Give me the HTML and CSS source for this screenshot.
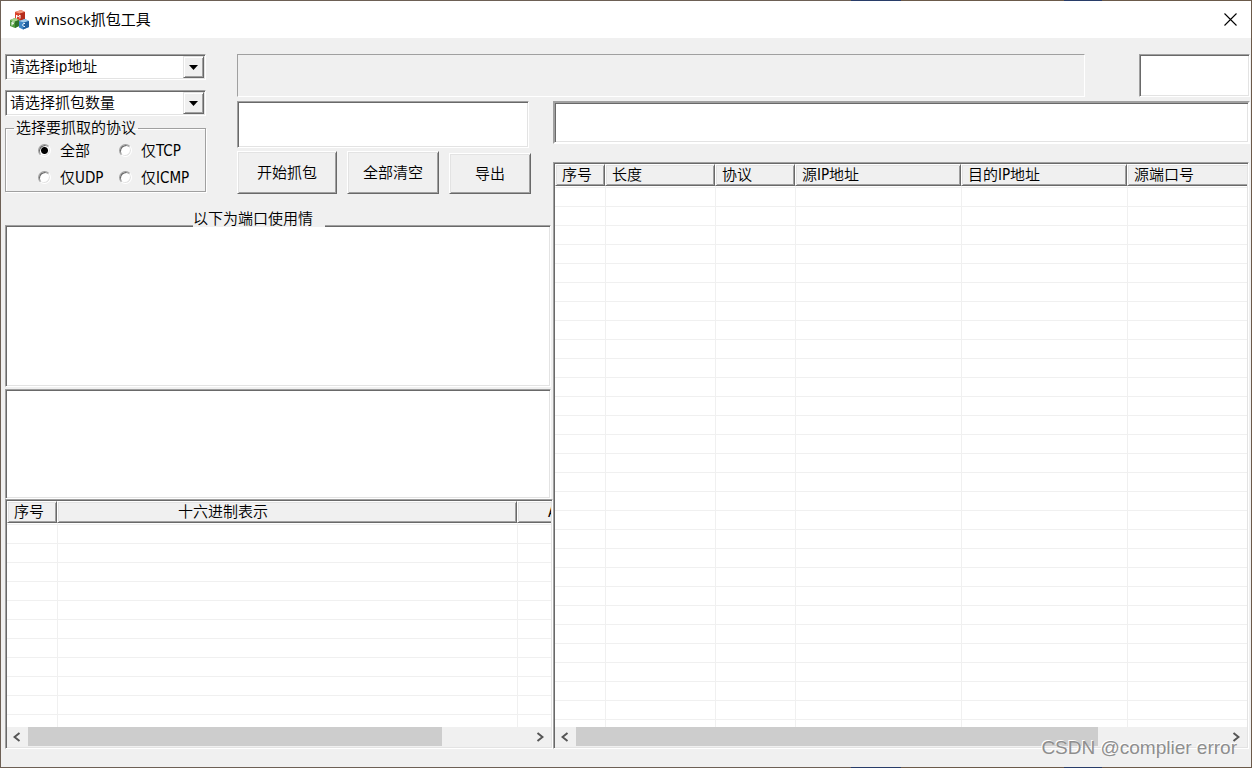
FILE: index.html
```html
<!DOCTYPE html>
<html lang="zh-CN">
<head>
<meta charset="utf-8">
<title>winsock抓包工具</title>
<link rel="stylesheet" href="styles.css">
</head>
<body>
<div class="window">
  <header class="titlebar">
    <svg class="app-icon" width="20" height="20" viewBox="0 0 20 20" aria-hidden="true">
      <path d="M5 2l6-2 4 2v7l-5 2-5-2z" fill="#d8432c"/>
      <path d="M5 2l6-2 4 2-5 1.500z" fill="#f29a80"/>
      <path d="M10 3.500l5-1.500v7l-5 2z" fill="#b52c1b"/>
      <path d="M0 10l5-2 4 2v6l-4 2-5-2z" fill="#4f9a3a"/>
      <path d="M0 10l5-2 4 2-4 1.500z" fill="#a5d38a"/>
      <path d="M5 11.500l4-1.500v6l-4 2z" fill="#2f7428"/>
      <path d="M9 11l6-2 4 2v6l-6 2.500-4-2z" fill="#3d86c6"/>
      <path d="M9 11l6-2 4 2-5 1.500z" fill="#a0cbea"/>
      <path d="M14 12.500l5-1.500v6l-6 2.500z" fill="#1f5f9f"/>
      <path d="M6.500 8.500V5l1.700 2L10 5v3.500M2 15.500v-3.500h2.500M2 13.700h2M15 13.500c-2.500-1-3.500 3.500 0 3" fill="none" stroke="#fff" stroke-width="1"/>
    </svg>
    <h1 class="title">winsock抓包工具</h1>
    <button class="close" type="button" aria-label="关闭">
      <svg width="13" height="13" viewBox="0 0 13 13"><path d="M.5.5l12 12M12.500.5l-12 12" stroke="#000" stroke-width="1.100" fill="none"/></svg>
    </button>
  </header>

  <main class="client">
    <section class="options">
      <div class="combo">
        <select aria-label="ip地址"><option>请选择ip地址</option></select>
        <span class="drop"><svg width="9" height="5" viewBox="0 0 9 5"><path d="M0 0h9L4.500 5z"/></svg></span>
      </div>
      <div class="combo">
        <select aria-label="抓包数量"><option>请选择抓包数量</option></select>
        <span class="drop"><svg width="9" height="5" viewBox="0 0 9 5"><path d="M0 0h9L4.500 5z"/></svg></span>
      </div>
      <fieldset class="protocols">
        <legend>选择要抓取的协议</legend>
        <div class="radios">
          <label><input type="radio" name="proto" checked>全部</label>
          <label><input type="radio" name="proto">仅TCP</label>
          <label><input type="radio" name="proto">仅UDP</label>
          <label><input type="radio" name="proto">仅ICMP</label>
        </div>
      </fieldset>
    </section>

    <section class="status">
      <div class="panel"></div>
      <input class="sunken counter" type="text" aria-label="计数">
    </section>

    <section class="actions">
      <input class="sunken message" type="text" aria-label="状态">
      <div class="buttons">
        <button class="push start" type="button">开始抓包</button>
        <button class="push clear" type="button">全部清空</button>
        <button class="push export" type="button">导出</button>
      </div>
    </section>

    <section class="packets">
      <div class="filter-frame"><input class="filter" type="text" aria-label="过滤"></div>
      <div class="sunken list">
        <div class="view">
          <table data-rows="30">
            <colgroup><col class="w50"><col class="w110"><col class="w80"><col class="w166"><col class="w166"><col class="w166"></colgroup>
            <thead><tr><th>序号</th><th>长度</th><th>协议</th><th>源IP地址</th><th>目的IP地址</th><th>源端口号</th></tr></thead>
            <tbody></tbody>
          </table>
        </div>
        <div class="scrollbar">
          <button type="button" aria-label="向左"><svg width="8" height="10" viewBox="0 0 8 10"><path d="M6.500 1l-5 4 5 4"/></svg></button>
          <div class="track"><div class="thumb" style="width:80.3%"></div></div>
          <button type="button" aria-label="向右"><svg width="8" height="10" viewBox="0 0 8 10"><path d="M1.500 1l5 4-5 4"/></svg></button>
        </div>
      </div>
    </section>

    <section class="details">
      <label class="ports-label" for="ports">以下为端口使用情</label>
      <textarea class="sunken ports" id="ports"></textarea>
      <textarea class="sunken info" aria-label="详细信息"></textarea>
      <div class="sunken list">
        <div class="view">
          <table data-rows="12">
            <colgroup><col class="w50"><col class="w460"><col class="w166"></colgroup>
            <thead><tr><th>序号</th><th class="hex">十六进制表示</th><th class="ascii">A</th></tr></thead>
            <tbody></tbody>
          </table>
        </div>
        <div class="scrollbar">
          <button type="button" aria-label="向左"><svg width="8" height="10" viewBox="0 0 8 10"><path d="M6.500 1l-5 4 5 4"/></svg></button>
          <div class="track"><div class="thumb" style="width:82.5%"></div></div>
          <button type="button" aria-label="向右"><svg width="8" height="10" viewBox="0 0 8 10"><path d="M1.500 1l5 4-5 4"/></svg></button>
        </div>
      </div>
    </section>
  </main>
  <div class="watermark">CSDN @complier error</div>
</div>
<script src="rows.js"></script>
</body>
</html>
```

FILE: rows.js
```js
// Fills each list with its empty grid rows.
document.querySelectorAll('table[data-rows]').forEach(function (table) {
  var columns = table.querySelectorAll('th').length;
  var body = table.tBodies[0];
  for (var i = 0; i < Number(table.dataset.rows); i++) {
    var row = body.insertRow();
    for (var c = 0; c < columns; c++) row.insertCell();
  }
});
```

FILE: styles.css
```css
* { box-sizing: border-box; }

body {
  margin: 0;
  font: 350 15px/20px "DejaVu Sans Condensed", "Noto Sans CJK SC", sans-serif;
  color: #000;
  background: #6b5a4a;
}

button, input, select, textarea { font: inherit; color: inherit; margin: 0; }

.window {
  position: relative;
  display: flex;
  flex-direction: column;
  height: 100vh;
  padding: 1px;
  background: linear-gradient(90deg, #6d6055 0 68%, #283c68 68% 72%, #6b5a4a 72% 85%, #283c68 85% 88%, #6b5a4a 88%);
  overflow: hidden;
}

.titlebar {
  display: flex;
  align-items: center;
  height: 37px;
  flex: none;
  padding-left: 9px;
  background: #fff;
}
.app-icon { margin-right: 5px; }
.title {
  flex: 1;
  margin: 0;
  padding-bottom: 2px;
  font: 400 15px/20px "Open Sans", "Noto Sans CJK SC", sans-serif;
}
.close {
  display: grid;
  place-items: center;
  width: 42px;
  height: 37px;
  padding: 0;
  border: 0;
  background: none;
}

.client {
  flex: 1;
  min-height: 0;
  display: grid;
  grid-template-columns: 232px 316px 1fr;
  grid-template-rows: 47px 93px 1fr;
  padding: 16px 1px 18px 4px;
  background: #f0f0f0;
}

.sunken {
  border: 1px solid;
  border-color: #a0a0a0 #fff #fff #a0a0a0;
  border-radius: 0;
  background: #fff;
  box-shadow: inset 1px 1px #696969, inset -1px -1px #e3e3e3;
  outline: 0;
}

/* Capture options */
.options { grid-area: 1 / 1 / 3 / 2; width: 201px; }
.combo {
  display: flex;
  height: 26px;
  margin-bottom: 10px;
  padding: 1px;
  border: 1px solid;
  border-color: #a0a0a0 #fff #fff #a0a0a0;
  background: #fff;
  box-shadow: inset 1px 1px #696969, inset -1px -1px #e3e3e3;
}
.combo + .combo { margin-bottom: 2px; }
.combo select {
  flex: 1;
  min-width: 0;
  padding: 0 0 0 3px;
  border: 0;
  background: none;
  appearance: none;
  outline: 0;
}
.drop {
  display: grid;
  place-items: center;
  width: 21px;
  border: 1px solid;
  border-color: #e3e3e3 #696969 #696969 #e3e3e3;
  background: #f0f0f0;
  box-shadow: inset 1px 1px #fff, inset -1px -1px #a0a0a0;
}
.protocols {
  height: 74px;
  margin: 0;
  padding: 0 0 0 32px;
  border: 1px solid #a0a0a0;
  box-shadow: 1px 1px #fff, inset 1px 1px #fff;
}
.protocols legend { margin-left: -24px; padding: 0 2px; height: 20px; }
.radios {
  display: grid;
  grid-template-columns: 81px 1fr;
  grid-auto-rows: 27px;
  margin-top: -1px;
}
.radios label { display: flex; align-items: center; gap: 9px; white-space: nowrap; }
.radios input {
  appearance: none;
  width: 13px;
  height: 13px;
  border: 1px solid;
  border-color: #a0a0a0 #fff #fff #a0a0a0;
  border-radius: 50%;
  background: #fff;
  box-shadow: inset 1px 1px #696969, inset -1px -1px #e3e3e3;
}
.radios input:checked { background: radial-gradient(circle, #000 3px, #fff 4px); }

/* Status strip */
.status { grid-area: 1 / 2 / 2 / 4; display: flex; height: 43px; }
.panel { flex: 1; margin-right: 54px; border: 1px solid; border-color: #a0a0a0 #fff #fff #a0a0a0; }
.counter { width: 111px; }

/* Action buttons */
.actions { grid-area: 2 / 2 / 3 / 3; }
.message { display: block; width: 292px; height: 47px; margin-bottom: 3px; }
.buttons { display: flex; align-items: flex-end; gap: 10px; }
.push {
  height: 43px;
  padding: 0;
  border: 1px solid;
  border-color: #fff #696969 #696969 #fff;
  background: #f0f0f0;
  box-shadow: inset 1px 1px #e3e3e3, inset -1px -1px #a0a0a0;
}
.start { width: 100px; }
.clear { width: 92px; }
.export { width: 82px; height: 41px; }

/* Captured packets */
.packets { grid-area: 2 / 3 / 4 / 4; display: flex; flex-direction: column; min-width: 0; min-height: 0; }
.filter-frame {
  height: 43px;
  margin-bottom: 18px;
  border: 1px solid;
  border-color: #a0a0a0 #fff #fff #a0a0a0;
}
.filter {
  display: block;
  width: 100%;
  height: 100%;
  border: 1px solid;
  border-color: #a0a0a0 #fff #fff #a0a0a0;
  box-shadow: inset 1px 1px #696969, inset -1px -1px #e3e3e3;
  outline: 0;
}
.packets .list { margin-right: 1px; }

.list { flex: 1; min-height: 0; display: flex; flex-direction: column; padding: 1px; }
.view { flex: 1; min-height: 0; overflow: hidden; }
.view table { width: 0; table-layout: fixed; border-collapse: separate; border-spacing: 0; }
.w50 { width: 50px; }
.w80 { width: 80px; }
.w110 { width: 110px; }
.w166 { width: 166px; }
.w460 { width: 460px; }
.view th {
  height: 22px;
  padding: 0 6px;
  border: 1px solid;
  border-color: #fff #696969 #696969 #fff;
  background: #f0f0f0;
  box-shadow: inset 1px 1px #e3e3e3, inset -1px -1px #a0a0a0;
  font-weight: inherit;
  line-height: 20px;
  text-align: left;
  white-space: nowrap;
}
.view th.hex { padding-left: 120px; }
.view th.ascii { padding-left: 30px; }
.view td { height: 19px; padding: 0; border: 0 solid #f0f0f0; border-width: 0 0 1px 1px; }
.view td:first-child { border-left: 0; }
.view tbody tr:first-child td { height: 2px; }

.scrollbar { display: flex; height: 20px; flex: none; padding-bottom: 1px; background: #f0f0f0; }
.scrollbar button {
  display: grid;
  place-items: center;
  width: 21px;
  padding: 0 2px 0 0;
  border: 0;
  background: none;
}
.scrollbar path { fill: none; stroke: #555; stroke-width: 2; }
.track { flex: 1; }
.thumb { height: 100%; background: #cdcdcd; }

/* Port usage and packet details */
.details {
  grid-area: 3 / 1 / 4 / 3;
  display: flex;
  flex-direction: column;
  min-height: 0;
  padding-top: 15px;
}
.ports-label {
  position: relative;
  z-index: 1;
  width: 132px;
  height: 18px;
  margin: 0 0 -2px 188px;
  line-height: 20px;
  background: #f0f0f0;
}
.details textarea { display: block; width: 546px; flex: none; resize: none; }
.ports { height: 162px; margin-bottom: 2px; }
.info { height: 110px; }

.watermark {
  position: absolute;
  right: 15px;
  bottom: 8px;
  font: 400 19px/24px "Liberation Sans", sans-serif;
  color: #8e8e8e;
  text-shadow: -1px -1px #fff;
}
```
